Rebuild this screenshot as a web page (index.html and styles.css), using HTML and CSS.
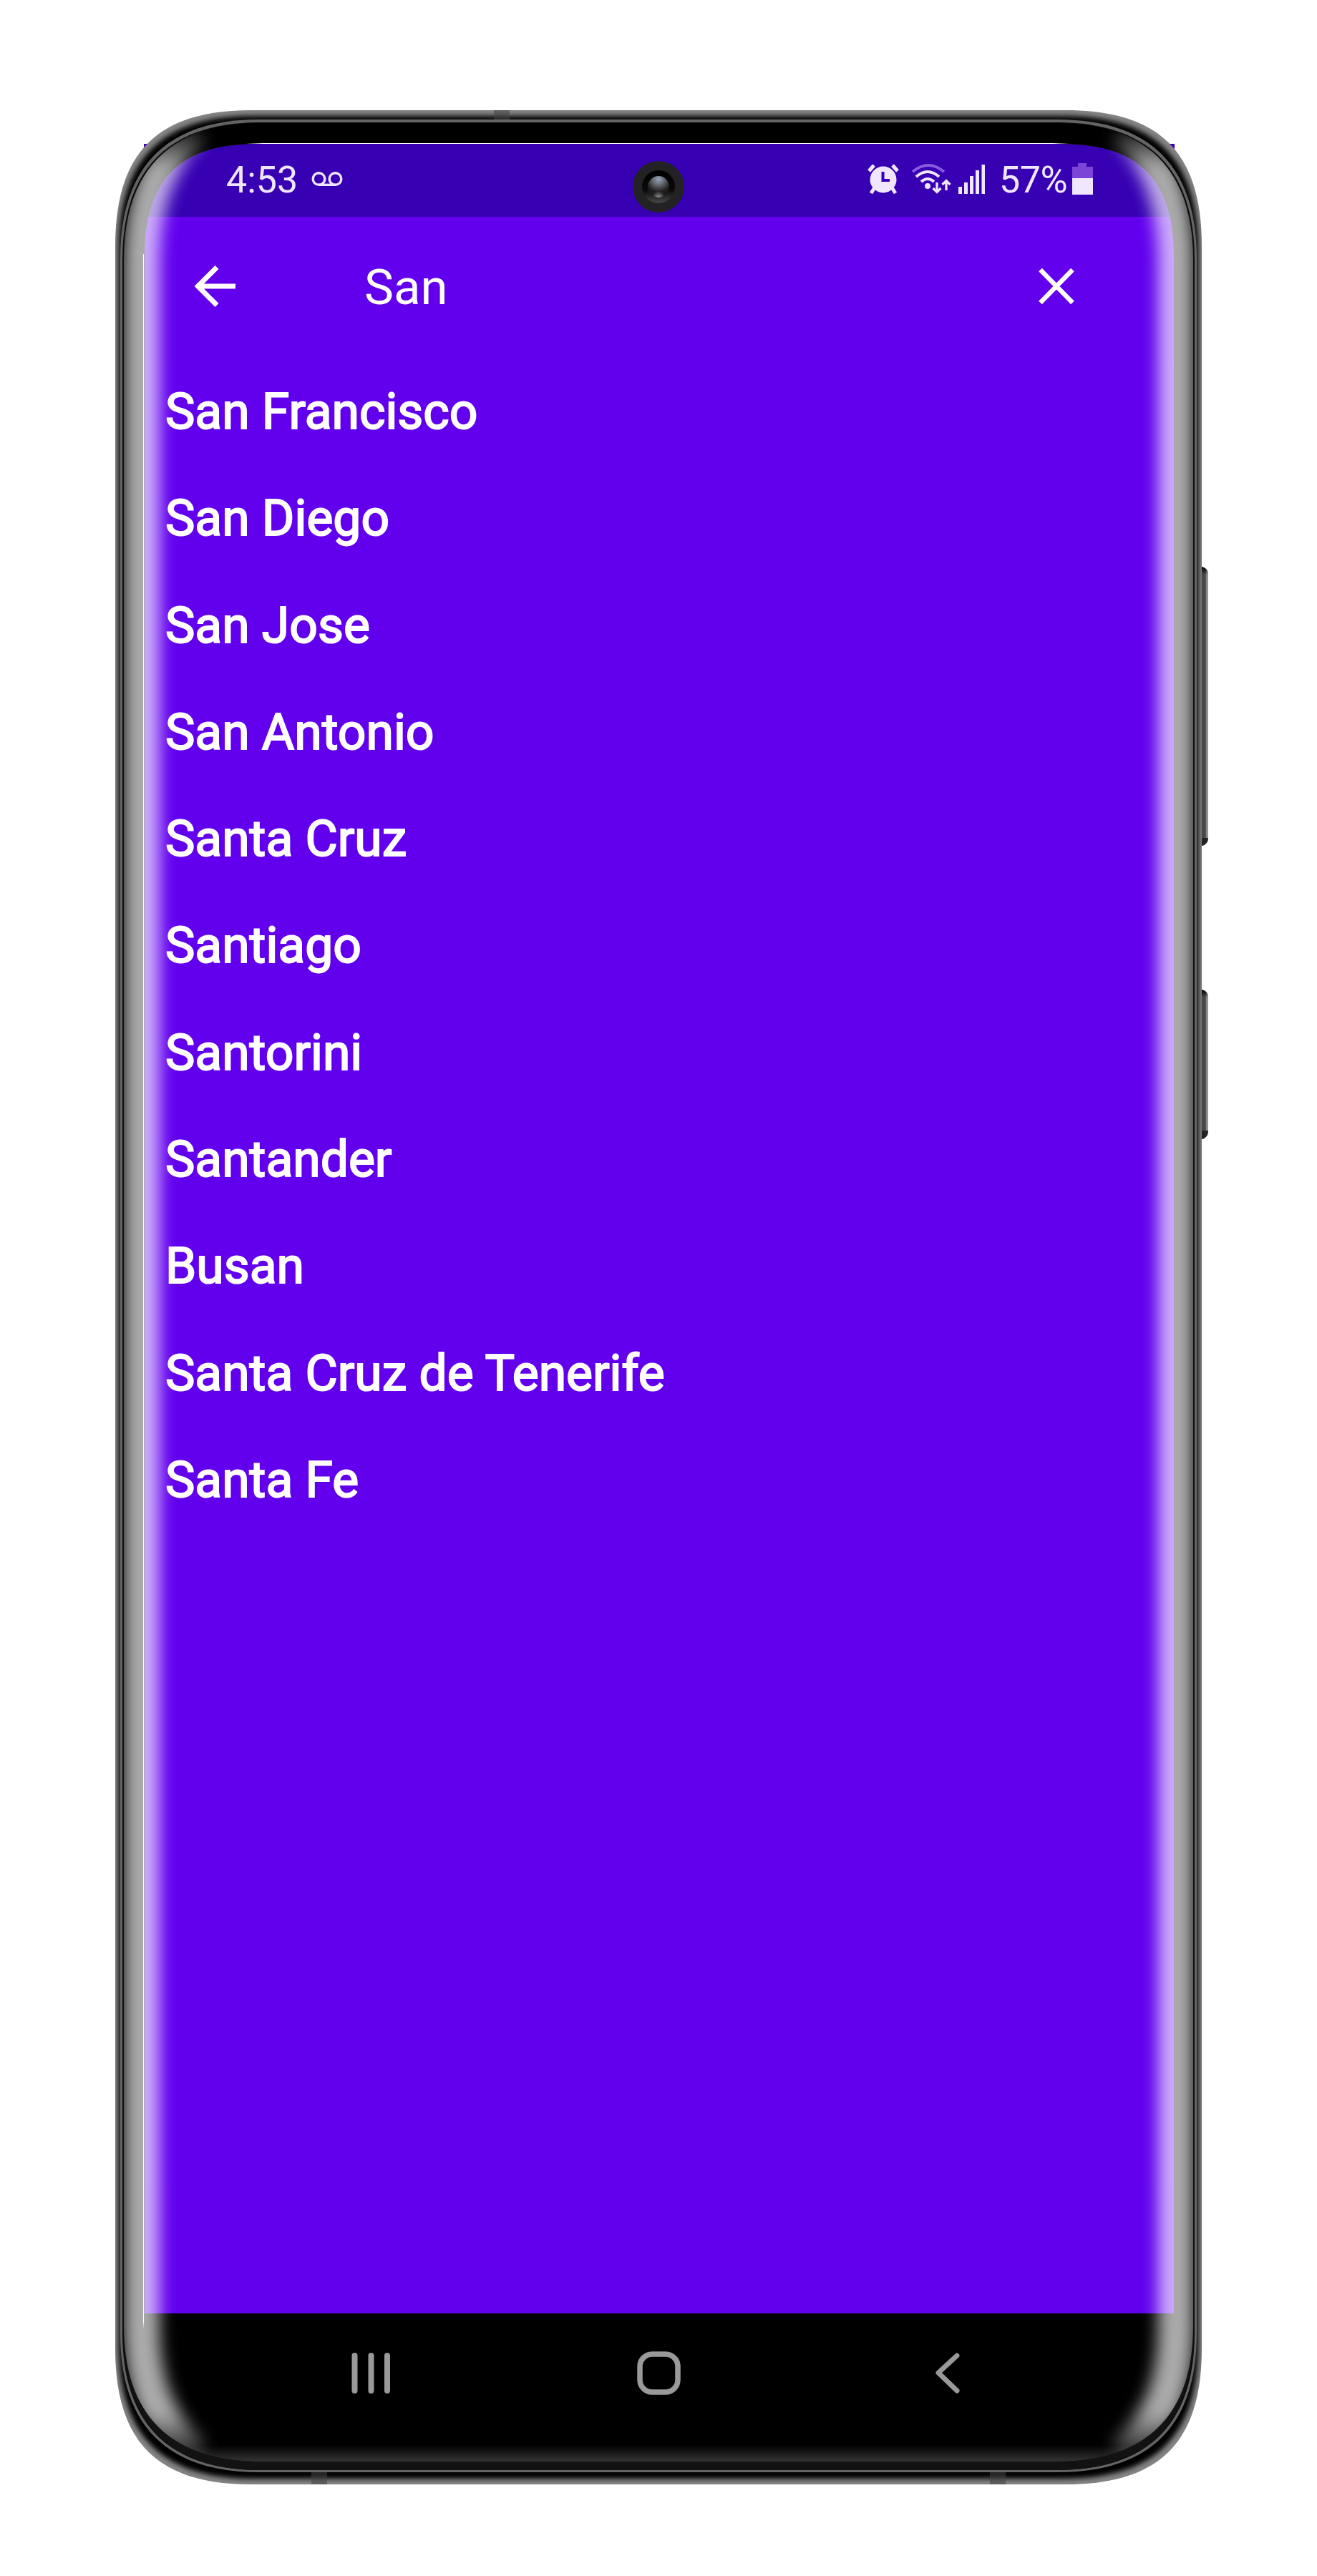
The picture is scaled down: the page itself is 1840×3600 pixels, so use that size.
FILE: index.html
```html
<!DOCTYPE html>
<html lang="en">
<head>
<meta charset="utf-8">
<title>City search</title>
<link rel="stylesheet" href="styles.css">
</head>
<body>
<div class="phone">
  <main class="screen">
    <header class="status">
      <div class="status-group">
        <span class="clock">4:53</span>
        <svg class="voicemail" width="44" height="22" viewBox="0 0 44 22" fill="none" stroke="#f0e6ff" stroke-width="3.4"><circle cx="10.500" cy="11" r="8.300"/><circle cx="33.500" cy="11" r="8.300"/><path d="M10.500 19.300H33.500"/></svg>
      </div>
      <div class="status-group">
        <svg class="alarm" width="46" height="44" viewBox="0 0 46 44"><path d="M3 11L10 3M43 11L36 3" stroke="#f0e6ff" stroke-width="5"/><path d="M11 34L6 42M35 34L40 42" stroke="#f0e6ff" stroke-width="5"/><circle cx="23" cy="23" r="18.500" fill="#f0e6ff"/><path d="M22.500 12V24H32" fill="none" stroke="#3700b3" stroke-width="4"/></svg>
        <svg class="wifi" width="58" height="44" viewBox="0 0 58 44" fill="none" stroke="#f0e6ff" stroke-width="4"><path d="M2 12Q24-6 46 12" stroke="#8b5ce0"/><path d="M7 19Q23 5 39 19"/><path d="M14 26Q23 18 32 26"/><circle cx="23" cy="32" r="4" fill="#f0e6ff" stroke="none"/><path d="M36 27V40M30.500 35L36 40.500L41.500 35M49 38V25M43.500 30L49 24.500L54.500 30" stroke-width="3.300"/></svg>
        <svg class="signal" width="38" height="42" viewBox="0 0 38 42" fill="#f0e6ff"><path d="M0 32h5v10H0zM8 26h5v16H8zM16 17h5v25h-5zM24 9h5v33h-5zM32.500 1h4.500v41h-4.500z"/></svg>
        <span class="percent">57%</span>
        <svg class="battery" width="29" height="44" viewBox="0 0 29 44"><path d="M8 0H20V5H29V21H0V5H8Z" fill="#7c45d8"/><path d="M0 21H29V44H0Z" fill="#f0e6ff"/></svg>
      </div>
    </header>
    <div class="appbar">
      <svg width="58" height="58" viewBox="0 0 58 58" fill="none" stroke="#fff" stroke-width="7"><path d="M57 29H6M31 2.500L4.500 29L31 55.500"/></svg>
      <span class="query">San</span>
      <svg class="clear" width="50" height="52" viewBox="0 0 50 52" stroke="#fff" stroke-width="6.500"><path d="M2.500 3L47.500 49M47.500 3L2.500 49"/></svg>
    </div>
    <ul class="cities">
      <li>San Francisco</li>
      <li>San Diego</li>
      <li>San Jose</li>
      <li>San Antonio</li>
      <li>Santa Cruz</li>
      <li>Santiago</li>
      <li>Santorini</li>
      <li>Santander</li>
      <li>Busan</li>
      <li>Santa Cruz de Tenerife</li>
      <li>Santa Fe</li>
    </ul>
  </main>
  <svg class="frame" width="1840" height="3600" viewBox="0 0 1840 3600">
    <defs>
      <clipPath id="around"><path clip-rule="evenodd" d="M0 0H1840V3600H0ZM202 356C202 251 252 201 357 201H1485C1590 201 1640 251 1640 356V3233H202Z"/></clipPath>
      <clipPath id="outer"><path d="M161 344C161 213 220 154 351 154H1489C1620 154 1679 213 1679 344V3282C1679 3413 1620 3472 1489 3472H351C220 3472 161 3413 161 3282Z"/></clipPath>
      <clipPath id="face"><path d="M173 363C173 238 238 172 363 172H1477C1602 172 1667 238 1667 363V3250C1667 3377 1600 3440 1475 3440H365C240 3440 173 3377 173 3250Z"/></clipPath>
      <filter id="soft" filterUnits="userSpaceOnUse" x="0" y="0" width="1840" height="3600"><feGaussianBlur stdDeviation="3.500"/></filter>
      <filter id="glow" filterUnits="userSpaceOnUse" x="0" y="0" width="1840" height="3600"><feGaussianBlur stdDeviation="11"/></filter>
      <linearGradient id="taper" gradientUnits="userSpaceOnUse" x1="0" y1="175" x2="0" y2="3445"><stop offset="0" stop-color="#fff" stop-opacity="0"/><stop offset=".018" stop-color="#fff"/><stop offset=".978" stop-color="#fff"/><stop offset="1" stop-color="#fff" stop-opacity="0"/></linearGradient>
      <linearGradient id="chin" x1="0" y1="0" x2="0" y2="1"><stop offset="0" stop-color="#000"/><stop offset="1" stop-color="#343434"/></linearGradient>
      <linearGradient id="key" x1="0" y1="0" x2="1" y2="0"><stop offset="0" stop-color="#444"/><stop offset=".6" stop-color="#4c4c4c"/><stop offset=".7" stop-color="#858585"/><stop offset="1" stop-color="#999"/></linearGradient>
      <linearGradient id="keyend" x1="0" y1="0" x2="0" y2="1"><stop offset="0" stop-color="#000"/><stop offset="1" stop-color="#000" stop-opacity="0"/></linearGradient>
      <linearGradient id="hair" x1="0" y1="0" x2="1" y2="0"><stop offset="0" stop-color="#fff" stop-opacity="0"/><stop offset=".02" stop-color="#fff"/><stop offset=".98" stop-color="#fff"/><stop offset="1" stop-color="#fff" stop-opacity="0"/></linearGradient>
      <radialGradient id="lens" cx=".5" cy=".15" r=".6"><stop offset="0" stop-color="#93a4ba"/><stop offset=".4" stop-color="#6c7078"/><stop offset="1" stop-color="#1d1b1c"/></radialGradient>
      <linearGradient id="lensring" x1="0" y1="0" x2="0" y2="1"><stop offset="0" stop-color="#000"/><stop offset=".6" stop-color="#0a0a0a"/><stop offset="1" stop-color="#484848"/></linearGradient>
      <radialGradient id="lenslow" cx=".5" cy="1" r=".3"><stop offset="0" stop-color="#999"/><stop offset="1" stop-color="#999" stop-opacity="0"/></radialGradient>
    </defs>
    <g>
      <path d="M1679 792Q1688 794 1688 803V1171Q1688 1180 1679 1182Z" fill="url(#key)"/>
      <path d="M1679 792Q1688 794 1688 803H1679Z" fill="url(#keyend)"/>
      <path d="M1679 1171H1688Q1688 1180 1679 1182Z" fill="#222"/>
      <path d="M1679 1383Q1688 1385 1688 1394V1580Q1688 1590 1679 1592Z" fill="url(#key)"/>
      <path d="M1679 1383Q1688 1385 1688 1394H1679Z" fill="url(#keyend)"/>
      <path d="M1679 1580H1688Q1688 1590 1679 1592Z" fill="#222"/>
    </g>
    <g clip-path="url(#around)">
      <g clip-path="url(#outer)">
        <path d="M0 0H1840V3600H0Z" fill="#858585"/>
        <path filter="url(#soft)" d="M166 350C166 222 226 162 354 162H1486C1614 162 1674 222 1674 350V3276C1674 3404 1614 3464 1486 3464H354C226 3464 166 3404 166 3276Z"/>
        <path d="M690 154h22v13h-22zM435 3455h22v17h-22zM1383 3455h22v17h-22z" fill="#444" opacity=".55"/>
      </g>
      <path fill="#646464" d="M168 362C168 232 233 167 363 167H1477C1607 167 1672 232 1672 362V3260C1672 3390 1607 3455 1477 3455H363C233 3455 168 3390 168 3260Z"/>
      <path fill="#0c0c0c" d="M171 363C171 236 236 171 363 171H1477C1604 171 1669 236 1669 363V3260C1669 3387 1604 3452 1477 3452H363C236 3452 171 3387 171 3260Z"/>
      <path fill="#121212" d="M173 363C173 238 238 172 363 172H1477C1602 172 1667 238 1667 363V3260C1667 3387 1602 3452 1477 3452H363C238 3452 173 3387 173 3260Z"/>
      <g clip-path="url(#face)">
        <path d="M160 160H1680V3440H160Z"/>
        <path d="M160 3417H1680V3440H160Z" fill="url(#chin)"/>
      </g>
    </g>
    <g class="bars" fill="none" stroke="#999" stroke-width="8" stroke-linecap="round" stroke-linejoin="round">
      <path d="M495.500 3292V3341M518.500 3292V3341M541 3292V3341"/>
      <rect x="894" y="3290" width="53" height="53" rx="17" stroke-width="7.500"/>
      <path d="M1337 3292L1311 3316L1337 3341" stroke-width="7"/>
    </g>
    <g clip-path="url(#face)" fill="none" stroke="url(#taper)" stroke-width="50">
      <g filter="url(#glow)" opacity=".67">
        <path d="M272 178C222 218 198 280 198 370V3250C198 3330 218 3385 272 3434"/>
        <path d="M1569 178C1619 218 1643 280 1643 370V3250C1643 3330 1623 3385 1569 3434"/>
      </g>
    </g>
    <rect x="344" y="200" width="1150" height="1" fill="url(#hair)"/>
    <path d="M200 355H201V3245L200.500 3254L200 3245Z" fill="#fff"/>
    <path d="M201 345H202V3233H201Z" fill="#a5a5a5"/>
    <g>
      <circle cx="920" cy="261" r="36" fill="#222123"/>
      <circle cx="920" cy="261" r="23" fill="url(#lensring)"/>
      <circle cx="920" cy="261" r="15" fill="url(#lens)"/>
      <circle cx="920" cy="261" r="15" fill="url(#lenslow)"/>
    </g>
  </svg>
</div>
</body>
</html>
```
FILE: styles.css
```css
body {
  margin: 0;
  background: #fff;
  font-family: Roboto, "Liberation Sans", sans-serif;
  color: #fff;
}

.phone {
  position: relative;
  box-sizing: border-box;
  width: 1840px;
  height: 3600px;
  padding: 201px 199px 0 201px;
}

.screen {
  height: 3032px;
  background: #6200ee;
}

.status {
  display: flex;
  justify-content: space-between;
  align-items: center;
  box-sizing: border-box;
  height: 102px;
  padding: 0 114px 4px 115px;
  background: #3700b3;
  color: #f0e6ff;
  font-size: 52px;
  line-height: 60px;
}

.status-group {
  display: flex;
  align-items: center;
}

.clock,
.percent {
  padding-top: 3px;
}

.voicemail {
  margin-left: 19px;
}

.wifi {
  margin-left: 16px;
}

.signal {
  margin-left: 8px;
}

.percent {
  margin-left: 19px;
  letter-spacing: -0.5px;
}

.battery {
  margin-left: 7px;
}

.appbar {
  display: flex;
  align-items: center;
  height: 194px;
  padding: 0 140px 0 71px;
}

.query {
  flex: 1;
  margin-left: 179px;
  padding-top: 3px;
  font-size: 69px;
  line-height: 80px;
}

.cities {
  margin: 0;
  padding: 4px 0 0 30px;
  list-style: none;
  font-size: 69.6px;
  line-height: 149.3px;
  -webkit-text-stroke: 2px #fff;
}

.frame {
  position: absolute;
  inset: 0;
}
```
